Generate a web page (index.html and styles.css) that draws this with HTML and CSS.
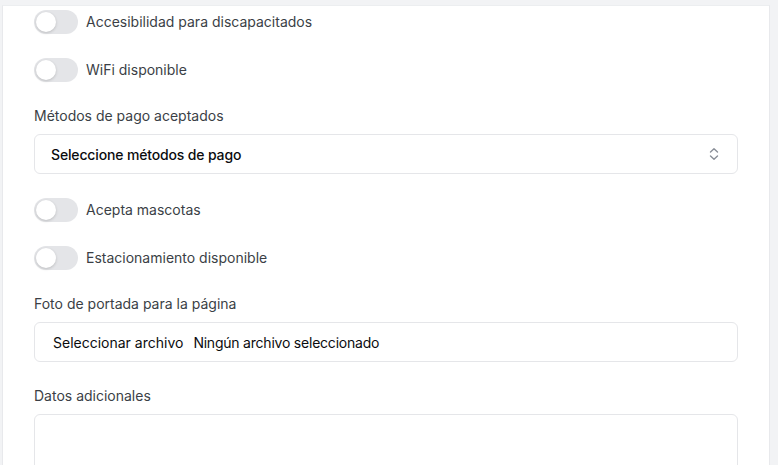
FILE: index.html
```html
<!DOCTYPE html>
<html lang="es">
<head>
<meta charset="utf-8">
<link rel="stylesheet" href="styles.css">
</head>
<body>
<div class="card">
  <div class="form">
    <label class="switch-row"><span class="switch"><span class="knob"></span></span><span class="switch-label">Accesibilidad para discapacitados</span></label>
    <label class="switch-row"><span class="switch"><span class="knob"></span></span><span class="switch-label">WiFi disponible</span></label>
    <div class="field">
      <div class="label">Métodos de pago aceptados</div>
      <div class="select">
        <span class="select-text">Seleccione métodos de pago</span>
        <svg class="chev" width="12" height="14" viewBox="0 0 12 14" fill="none" stroke="#8a8f98" stroke-width="1.4" stroke-linecap="round" stroke-linejoin="round"><path d="M2.5 5 L6 1.8 L9.5 5"/><path d="M2.5 9 L6 12.2 L9.5 9"/></svg>
      </div>
    </div>
    <label class="switch-row"><span class="switch"><span class="knob"></span></span><span class="switch-label">Acepta mascotas</span></label>
    <label class="switch-row"><span class="switch"><span class="knob"></span></span><span class="switch-label">Estacionamiento disponible</span></label>
    <div class="field">
      <div class="label">Foto de portada para la página</div>
      <div class="file">
        <span class="file-btn">Seleccionar archivo</span>
        <span class="file-name">Ningún archivo seleccionado</span>
      </div>
    </div>
    <div class="field">
      <div class="label">Datos adicionales</div>
      <div class="textarea"></div>
    </div>
  </div>
</div>
</body>
</html>
```

FILE: styles.css
```css
html, body {
  margin: 0;
  padding: 0;
  background: #f2f3f5;
  height: 465px;
  overflow: hidden;
}
body {
  font-family: Inter, "Noto Sans", sans-serif;
  font-size: 14px;
  color: #3b3f46;
}
.card {
  margin: 5px 0 0 2px;
  width: 768px;
  box-sizing: border-box;
  background: #fff;
  border-left: 1px solid #e8e9ec;
  border-right: 1px solid #e8e9ec;
  border-top: 1px solid #eceef0;
  padding: 4px 31px 0 31px;
  min-height: 470px;
}
.form {
  display: flex;
  flex-direction: column;
  gap: 24px;
}
.switch-row {
  display: flex;
  align-items: center;
  gap: 8px;
  height: 24px;
}
.switch {
  width: 44px;
  height: 24px;
  border-radius: 12px;
  background: #e4e5e8;
  position: relative;
  flex: none;
}
.knob {
  position: absolute;
  left: 2px;
  top: 2px;
  width: 20px;
  height: 20px;
  border-radius: 50%;
  background: #fff;
  box-shadow: 0 1px 3px rgba(0,0,0,0.18);
}
.switch-label {
  line-height: 20px;
  color: #3b3f46;
}
.field {
  display: flex;
  flex-direction: column;
  gap: 8px;
}
.label {
  line-height: 20px;
  color: #3b3f46;
}
.select, .file {
  height: 40px;
  box-sizing: border-box;
  border: 1px solid #e5e6e9;
  border-radius: 6px;
  display: flex;
  align-items: center;
}
.select {
  padding: 0 17px 0 16px;
  justify-content: space-between;
}
.select-text {
  color: #0b0c0e;
  font-weight: 500;
  letter-spacing: -0.15px;
}
.chev { display: block; }
.file {
  padding: 0 18px;
  gap: 10px;
  color: #0b0c0e;
}
.file-name {
  letter-spacing: -0.22px;
}
.textarea {
  height: 80px;
  border: 1px solid #e5e6e9;
  border-radius: 6px;
}
```
